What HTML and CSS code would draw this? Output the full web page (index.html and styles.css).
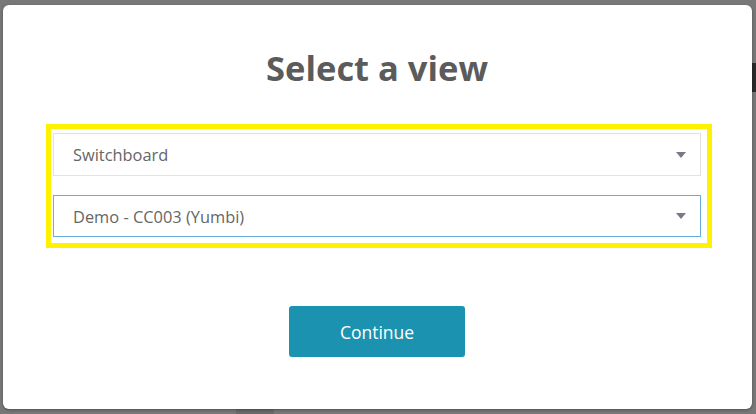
FILE: index.html
```html
<!DOCTYPE html>
<html>
<head>
<meta charset="utf-8">
<link rel="stylesheet" href="styles.css">
</head>
<body>
<div class="backdrop-strip"></div>
<div class="side-tab"></div>
<div class="modal">
  <h1 class="title">Select a view</h1>
  <div class="highlight">
    <div class="select select-plain">
      <span class="select-text">Switchboard</span>
      <span class="caret"></span>
    </div>
    <div class="select select-focus">
      <span class="select-text">Demo - CC003 (Yumbi)</span>
      <span class="caret"></span>
    </div>
  </div>
  <div class="actions">
    <button class="btn">Continue</button>
  </div>
</div>
</body>
</html>
```
FILE: styles.css
```css
html, body {
  margin: 0;
  height: 100%;
}
body {
  background: #787878;
  padding: 5px 4px 5px 3px;
  box-sizing: border-box;
  font-family: "Open Sans", "Liberation Sans", sans-serif;
  position: relative;
  overflow: hidden;
}
.backdrop-strip {
  position: absolute;
  left: 236px;
  bottom: 0;
  width: 38px;
  height: 5px;
  background: #6a6a6a;
}
.side-tab {
  position: absolute;
  right: 0;
  top: 63px;
  width: 4px;
  height: 29px;
  background: #2a2a2a;
}
.modal {
  position: relative;
  background: #fff;
  border-radius: 6px;
  height: 404px;
  box-shadow: 0 1px 3px rgba(0,0,0,0.35);
  display: flex;
  flex-direction: column;
  padding-top: 39px;
  box-sizing: border-box;
}
.title {
  margin: 0;
  padding-right: 1px;
  text-align: center;
  font-size: 34.5px;
  line-height: 47px;
  font-weight: 700;
  color: #5b5b5b;
}
.highlight {
  margin: 33px 40px 0 43px;
  border: 5px solid #fff200;
  padding: 4px 6px 6px 2px;
  display: flex;
  flex-direction: column;
  gap: 19px;
}
.select {
  height: 43px;
  box-sizing: border-box;
  border: 1px solid #e2e2de;
  display: flex;
  align-items: center;
  padding: 0 14px 0 19px;
}
.select-focus {
  height: 42px;
  border-color: #6aaee0;
}
.select-text {
  flex: 1;
  font-size: 16.4px;
  color: #666;
}
.caret {
  width: 0;
  height: 0;
  border-left: 5px solid transparent;
  border-right: 5px solid transparent;
  border-top: 6px solid #777a85;
}
.actions {
  display: flex;
  justify-content: center;
  margin-top: 58px;
  padding-right: 1px;
}
.btn {
  width: 176px;
  height: 51px;
  background: #1b92b0;
  border: none;
  border-radius: 3px;
  color: #fff;
  font-family: "Open Sans", "Liberation Sans", sans-serif;
  font-size: 17.5px;
}
```
